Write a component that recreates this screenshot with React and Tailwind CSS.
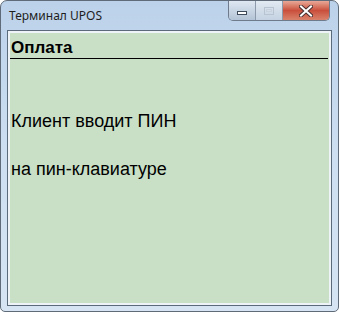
import React from 'react';

const CloseGlyph = () => (
  <svg width="14" height="12" viewBox="0 0 14 12">
    <path d="M2 1.5 L12 10.5 M12 1.5 L2 10.5" stroke="#4a3030" strokeWidth="4" strokeLinecap="square" />
    <path d="M2 1.5 L12 10.5 M12 1.5 L2 10.5" stroke="#ffffff" strokeWidth="2" strokeLinecap="square" />
  </svg>
);

const App = () => {
  return (
    <div className="w-[339px] h-[312px] bg-white">
      <div className="w-[339px] h-[312px] rounded-t-[7px] rounded-b-[5px] border border-[#5f6b78] bg-gradient-to-b from-[#bcd2ea] via-[#cddff1] to-[#d6e4f3] flex flex-col">
        {/* title bar */}
        <div className="h-[29px] flex items-start">
          <span className="pl-[8px] pt-[7px] text-[12px] leading-[16px] text-[#1e1e1e]" style={{ fontFamily: '"Segoe UI", "Noto Sans", sans-serif' }}>
            Терминал UPOS
          </span>
          <div className="ml-auto mr-[8px] flex h-[20px] rounded-b-[5px] border border-t-0 border-[#6e7b8c] overflow-hidden">
            <div className="w-[27px] h-full flex items-end justify-center pb-[5px] bg-gradient-to-b from-[#dfe8f2] via-[#c8d5e3] to-[#b4c4d6] border-r border-[#8d9aab]">
              <div className="w-[10px] h-[4px] bg-white border border-[#3d4a5a]" />
            </div>
            <div className="w-[27px] h-full flex items-center justify-center bg-gradient-to-b from-[#e2eaf3] via-[#d2dde9] to-[#c4d2e1] border-r border-[#8d9aab]">
              <div className="w-[10px] h-[8px] border border-[#b8c4d2] flex items-center justify-center">
                <div className="w-[6px] h-[3px] border border-[#c8d2de]" />
              </div>
            </div>
            <div className="w-[46px] h-full flex items-center justify-center bg-gradient-to-b from-[#e8a898] via-[#c94f3c] to-[#d9826c]">
              <CloseGlyph />
            </div>
          </div>
        </div>

        {/* client area */}
        <div className="mx-[6px] h-[276px] border border-[#5b6b7c] p-[2px] bg-[#eef3f8]">
          <div className="h-full bg-[#c9e0c7] pt-[5px]" style={{ fontFamily: '"Liberation Sans", Arial, sans-serif' }}>
            <div className="h-[21px] border-b border-black mr-[1px] pl-[1px] text-[17px] leading-[20px] font-bold text-black">
              Оплата
            </div>
            <div className="mt-[52px] pl-[1px] text-[18px] leading-[20px] text-black">
              Клиент вводит ПИН
            </div>
            <div className="mt-[28px] pl-[1px] text-[18px] leading-[20px] text-black">
              на пин-клавиатуре
            </div>
          </div>
        </div>
      </div>
    </div>
  );
};

export default App;
